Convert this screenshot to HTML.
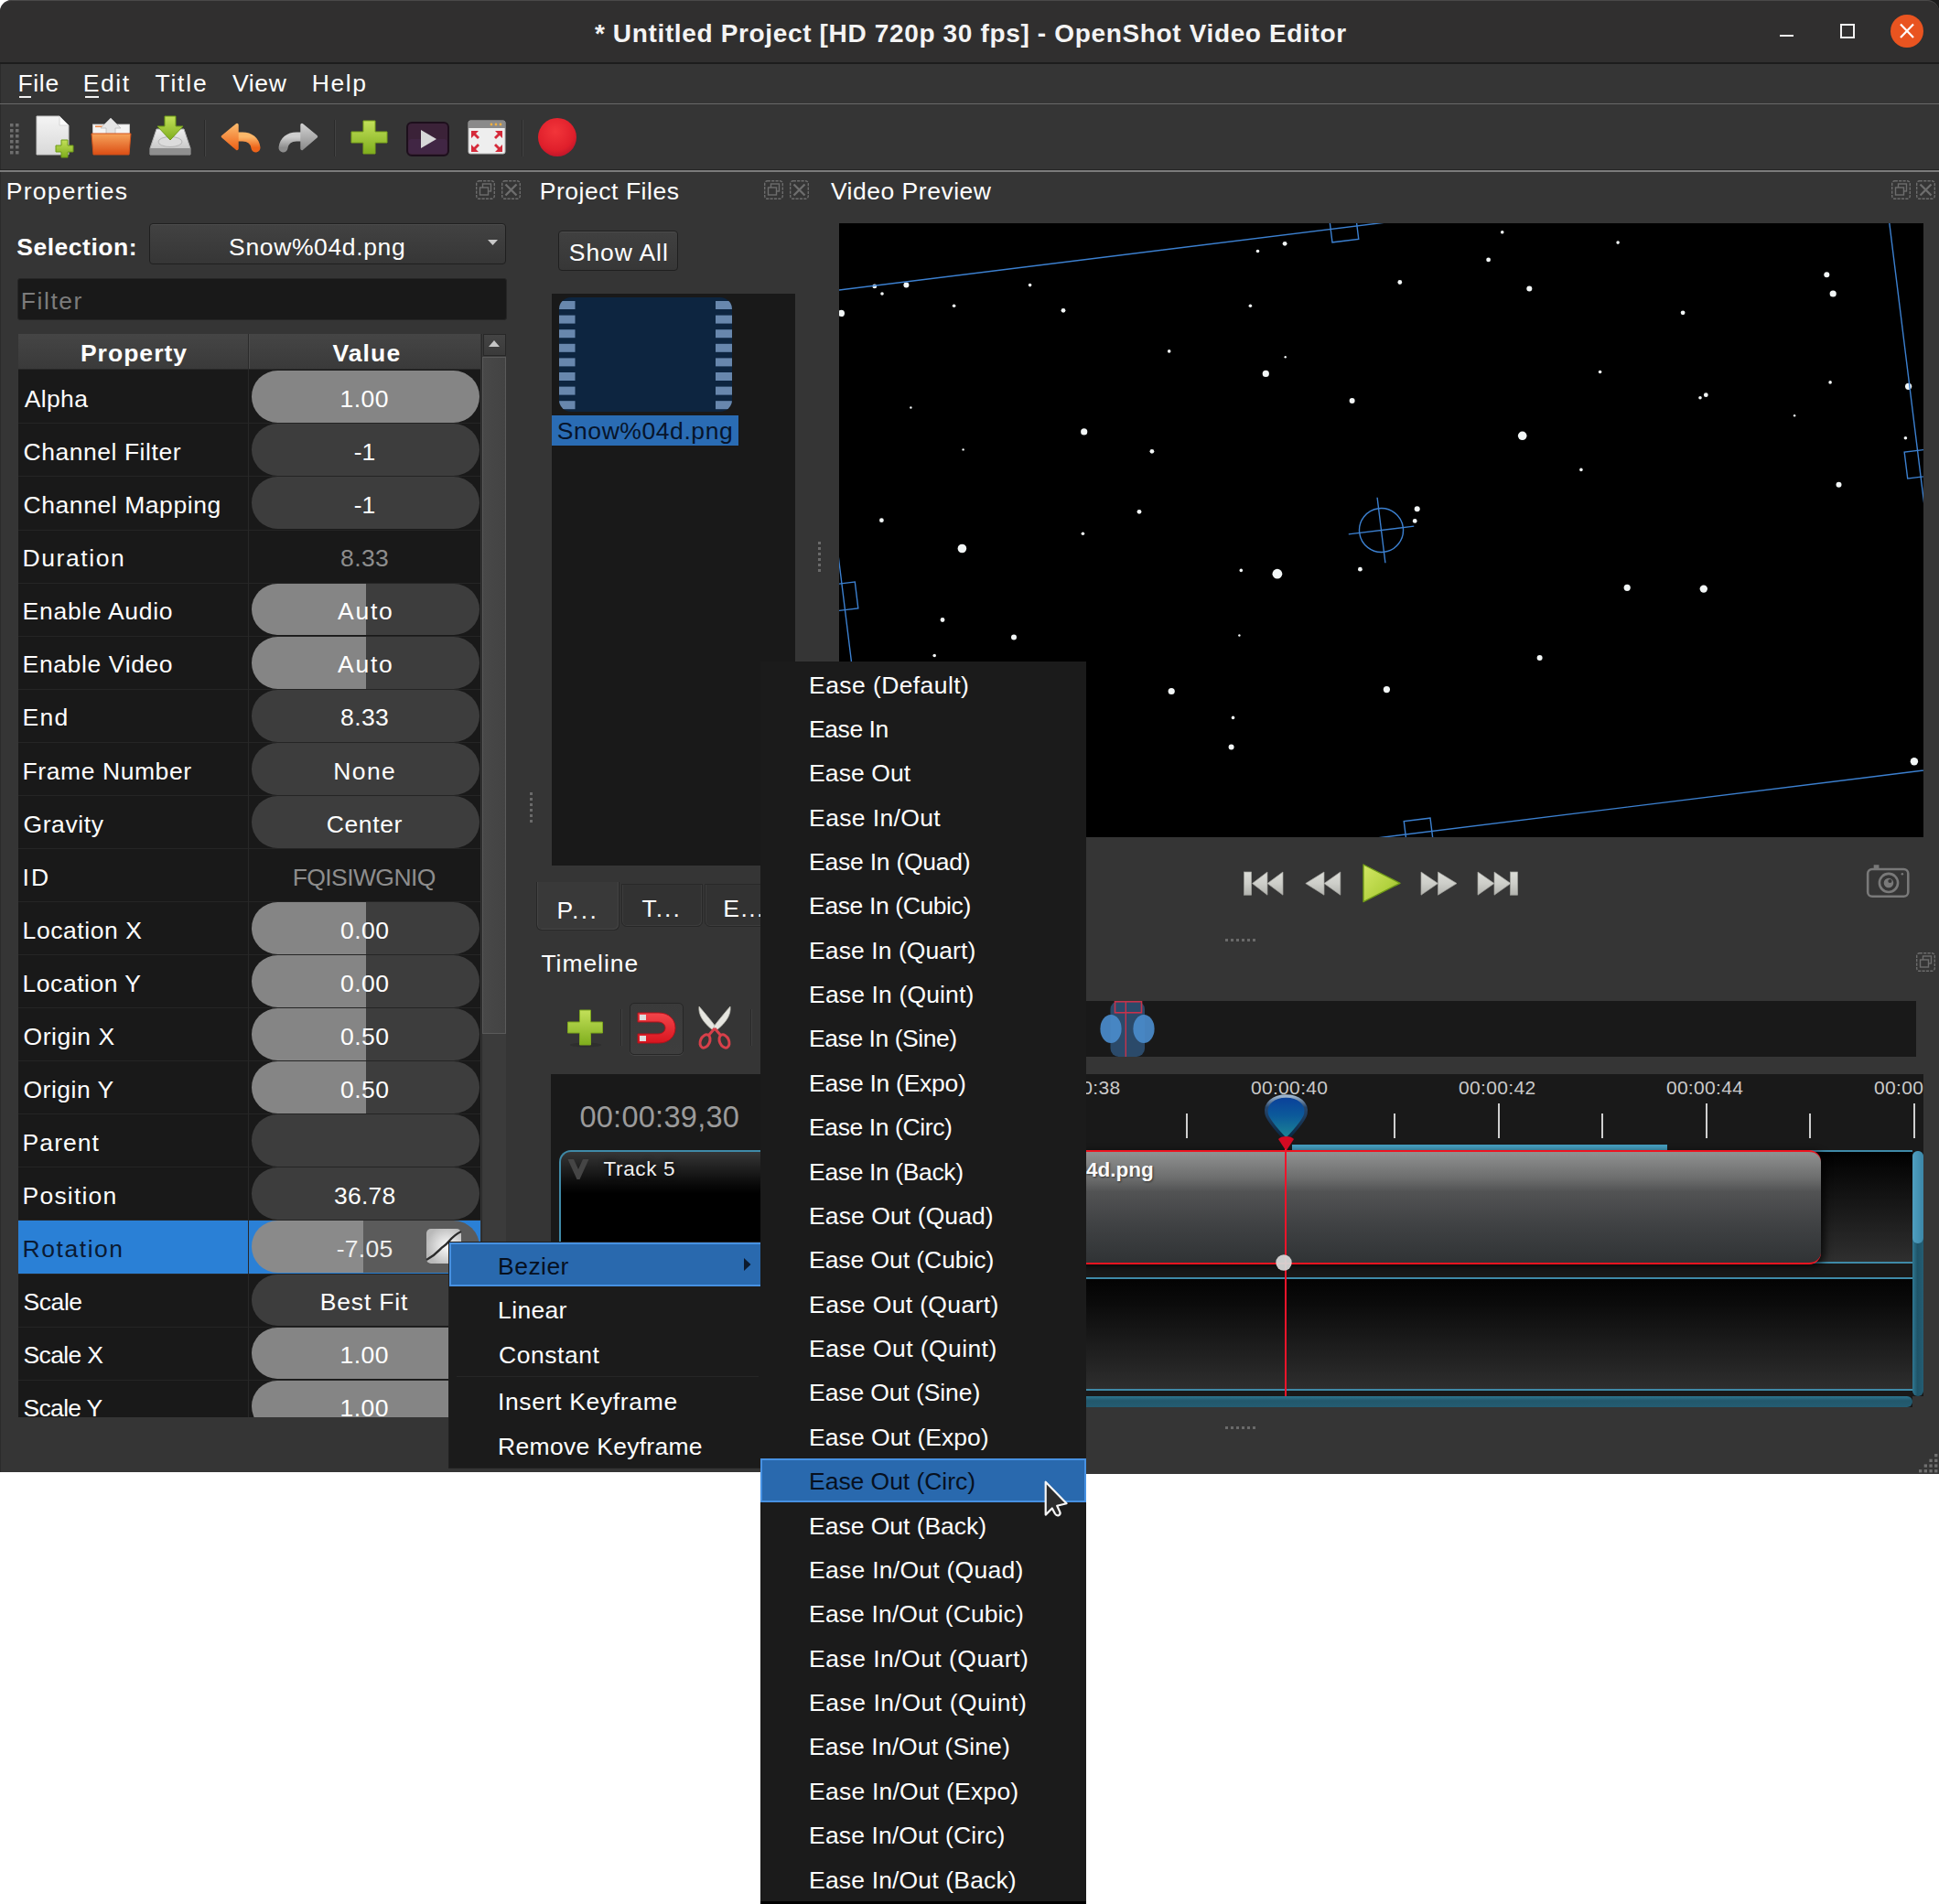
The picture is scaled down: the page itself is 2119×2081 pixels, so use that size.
<!DOCTYPE html>
<html><head><meta charset="utf-8"><title>OpenShot Video Editor</title>
<style>
html,body{margin:0;padding:0;}
body{width:2119px;height:2081px;background:#fff;position:relative;overflow:hidden;font-family:"Liberation Sans",sans-serif;}
.b{position:absolute;box-sizing:border-box;}
.t{position:absolute;white-space:pre;}
svg{position:absolute;overflow:visible;}
</style></head><body>
<div class="b" style="left:2095.0px;top:0.0px;width:24.0px;height:24.0px;background:#1c1c1c;"></div>
<div class="b" style="left:0.0px;top:0.0px;width:2119.0px;height:1609.3px;background:#353535;border-radius:13px 13px 0 0;border-left:1px solid #2b2b2b;"></div>
<div class="b" style="left:1000.0px;top:1600.0px;width:1119.0px;height:11.4px;background:#353535;"></div>
<div class="b" style="left:0.0px;top:0.0px;width:2119.0px;height:70.0px;background:#302f2f;border-radius:13px 13px 0 0;border-top:1px solid #4a4949;border-bottom:2px solid #1d1d1d;"></div>
<span class="t " style="left:649.9px;top:22.6px;font-size:28px;line-height:28px;color:#f4f4f4;letter-spacing:0.65px;font-weight:bold;">* Untitled Project [HD 720p 30 fps] - OpenShot Video Editor</span>
<div class="b" style="left:1944.5px;top:37.5px;width:15.5px;height:2.0px;background:#f2f2f2;"></div>
<div class="b" style="left:2010.5px;top:26.0px;width:16.0px;height:16.0px;border:2px solid #f2f2f2;"></div>
<div class="b" style="left:2066.0px;top:16.0px;width:36.0px;height:36.0px;background:#e95420;border-radius:50%;"></div>
<svg style="left:2066px;top:16px" width="36" height="36"><path d="M11 10.5 L25 25 M25 10.5 L11 25" stroke="#fff" stroke-width="2.2" fill="none"/></svg>
<span class="t " style="left:19.5px;top:78.1px;font-size:26.5px;line-height:26.5px;color:#fff;letter-spacing:0.65px;">File</span>
<span class="t " style="left:90.8px;top:78.1px;font-size:26.5px;line-height:26.5px;color:#fff;letter-spacing:1.57px;">Edit</span>
<span class="t " style="left:169.4px;top:78.1px;font-size:26.5px;line-height:26.5px;color:#fff;letter-spacing:1.80px;">Title</span>
<span class="t " style="left:253.9px;top:78.1px;font-size:26.5px;line-height:26.5px;color:#fff;letter-spacing:0.70px;">View</span>
<span class="t " style="left:340.8px;top:78.1px;font-size:26.5px;line-height:26.5px;color:#fff;letter-spacing:1.60px;">Help</span>
<div class="b" style="left:20.8px;top:104.5px;width:13.0px;height:2.0px;background:#f0f0f0;"></div>
<div class="b" style="left:92.5px;top:104.5px;width:15.5px;height:2.0px;background:#f0f0f0;"></div>
<div class="b" style="left:0.0px;top:113.0px;width:2119.0px;height:1.0px;background:#686868;"></div>
<div class="b" style="left:0.0px;top:184.5px;width:2119.0px;height:1.5px;background:#242424;"></div>
<div class="b" style="left:0.0px;top:186.0px;width:2119.0px;height:1.5px;background:#7b7b7b;"></div>
<svg style="left:11px;top:135px" width="12" height="36"><rect x="0" y="0" width="3.5" height="3.5" fill="#6e6e6e"/><rect x="6" y="0" width="3.5" height="3.5" fill="#6e6e6e"/><rect x="0" y="6" width="3.5" height="3.5" fill="#6e6e6e"/><rect x="6" y="6" width="3.5" height="3.5" fill="#6e6e6e"/><rect x="0" y="12" width="3.5" height="3.5" fill="#6e6e6e"/><rect x="6" y="12" width="3.5" height="3.5" fill="#6e6e6e"/><rect x="0" y="18" width="3.5" height="3.5" fill="#6e6e6e"/><rect x="6" y="18" width="3.5" height="3.5" fill="#6e6e6e"/><rect x="0" y="24" width="3.5" height="3.5" fill="#6e6e6e"/><rect x="6" y="24" width="3.5" height="3.5" fill="#6e6e6e"/><rect x="0" y="30" width="3.5" height="3.5" fill="#6e6e6e"/><rect x="6" y="30" width="3.5" height="3.5" fill="#6e6e6e"/></svg>
<svg style="left:39px;top:126px" width="42" height="47" viewBox="0 0 42 47">
<defs><linearGradient id="gdoc" x1="0" y1="0" x2="0" y2="1"><stop offset="0" stop-color="#f4f4f4"/><stop offset="1" stop-color="#d9d9d9"/></linearGradient>
<linearGradient id="ggreen" x1="0" y1="0" x2="0" y2="1"><stop offset="0" stop-color="#c3e05a"/><stop offset="1" stop-color="#7fae1d"/></linearGradient></defs>
<path d="M1 1 H26 L36 11 V43 H1 Z" fill="url(#gdoc)" stroke="#c9c9c9" stroke-width="1"/>
<path d="M26 1 V11 H36 Z" fill="#fafafa" stroke="#cfcfcf" stroke-width="0.8"/>
<path d="M28 27 h7 v6 h6 v7 h-6 v6 h-7 v-6 h-6 v-7 h6 z" fill="url(#ggreen)" stroke="#6f9c16" stroke-width="1"/>
</svg>
<svg style="left:98px;top:127px" width="47" height="44" viewBox="0 0 47 44">
<defs><linearGradient id="gfold" x1="0" y1="0" x2="0" y2="1"><stop offset="0" stop-color="#f6a45c"/><stop offset="1" stop-color="#dc4e14"/></linearGradient></defs>
<rect x="3.5" y="9" width="40" height="13" fill="#f4f4f4" stroke="#d0d0d0" stroke-width="0.8"/>
<rect x="6" y="10.5" width="10" height="1.6" fill="#ef8a4a"/>
<path d="M23 2 L34 13 H28 V21 H18 V13 H12 Z" fill="#e4e4e4" stroke="#bdbdbd" stroke-width="0.8"/>
<path d="M2 19 H45 L43 42 H4 Z" fill="url(#gfold)" stroke="#d2501a" stroke-width="1"/>
</svg>
<svg style="left:162px;top:126px" width="48" height="46" viewBox="0 0 48 46">
<defs><linearGradient id="gdrv" x1="0" y1="0" x2="0" y2="1"><stop offset="0" stop-color="#f0f0f0"/><stop offset="1" stop-color="#bdbdbd"/></linearGradient></defs>
<path d="M9 15 H39 L46 36 V43 H2 V36 Z" fill="url(#gdrv)" stroke="#a9a9a9" stroke-width="1"/>
<path d="M2 36 H46 V43 H2 Z" fill="#8f8f8f"/>
<ellipse cx="24" cy="29" rx="13" ry="5.5" fill="#dcdcdc" stroke="#b5b5b5" stroke-width="1"/>
<path d="M18 1 H30 V12 H38 L24 27 L10 12 H18 Z" fill="url(#ggreen)" stroke="#6f9c16" stroke-width="1"/>
</svg>
<div class="b" style="left:222.5px;top:131.0px;width:1.0px;height:40.0px;background:#2a2a2a;"></div>
<div class="b" style="left:223.5px;top:131.0px;width:1.0px;height:40.0px;background:#424242;"></div>
<svg style="left:240px;top:133px" width="46" height="36" viewBox="0 0 46 36">
<defs><linearGradient id="gund" x1="0" y1="0" x2="0" y2="1"><stop offset="0" stop-color="#fcb86a"/><stop offset="1" stop-color="#ee641a"/></linearGradient>
<linearGradient id="gred" x1="0" y1="0" x2="0" y2="1"><stop offset="0" stop-color="#cfcfcf"/><stop offset="1" stop-color="#8d8d8d"/></linearGradient></defs>
<path d="M18 16.5 H25 C33 16.5 38.5 21 39.5 28.5" fill="none" stroke="url(#gund)" stroke-width="10" stroke-linecap="round"/>
<path d="M19 3.5 L3.5 16.2 L19 29.5 Z" fill="url(#gund)" stroke="url(#gund)" stroke-width="3.4" stroke-linejoin="round"/>
</svg>
<svg style="left:303px;top:133px" width="46" height="36" viewBox="0 0 46 36">
<path d="M28 16.5 H21 C13 16.5 7.5 21 6.5 28.5" fill="none" stroke="url(#gred)" stroke-width="10" stroke-linecap="round"/>
<path d="M27 3.5 L42.5 16.2 L27 29.5 Z" fill="url(#gred)" stroke="url(#gred)" stroke-width="3.4" stroke-linejoin="round"/>
</svg>
<div class="b" style="left:364.5px;top:131.0px;width:1.0px;height:40.0px;background:#2a2a2a;"></div>
<div class="b" style="left:365.5px;top:131.0px;width:1.0px;height:40.0px;background:#424242;"></div>
<svg style="left:383px;top:131px" width="41" height="38" viewBox="0 0 41 38">
<path d="M14 1 h13 v12 h13 v12 h-13 v12 h-13 v-12 h-13 v-12 h13 z" fill="url(#ggreen)" stroke="#7da61d" stroke-width="1" stroke-linejoin="round"/>
</svg>
<svg style="left:444px;top:133px" width="47" height="38" viewBox="0 0 47 38">
<rect x="1" y="1" width="45" height="36" rx="5" fill="#3b2238" stroke="#1d0f1c" stroke-width="2"/>
<rect x="2.5" y="19" width="42" height="16" rx="3" fill="#45284a" opacity="0.7"/>
<path d="M16 9 L33 19 L16 29 Z" fill="#d8d8d8"/>
</svg>
<svg style="left:511px;top:131px" width="42" height="38" viewBox="0 0 42 38">
<rect x="1" y="1" width="40" height="36" rx="2" fill="#eeeeee" stroke="#bbb" stroke-width="1"/>
<rect x="1" y="1" width="40" height="8" fill="#8a8a8a"/>
<circle cx="26" cy="5" r="1.4" fill="#f0b040"/><circle cx="31" cy="5" r="1.4" fill="#f0b040"/><circle cx="36" cy="5" r="1.4" fill="#f0b040"/>
<g fill="#d52a3a"><path d="M4 12 h8 l-3 3 4 4 -2 2 -4 -4 -3 3z"/><path d="M38 12 h-8 l3 3 -4 4 2 2 4 -4 3 3z"/><path d="M4 35 h8 l-3 -3 4 -4 -2 -2 -4 4 -3 -3z"/><path d="M38 35 h-8 l3 -3 -4 -4 2 -2 4 4 3 -3z"/></g>
</svg>
<div class="b" style="left:569.5px;top:131.0px;width:1.0px;height:40.0px;background:#2a2a2a;"></div>
<div class="b" style="left:570.5px;top:131.0px;width:1.0px;height:40.0px;background:#424242;"></div>
<svg style="left:587px;top:128px" width="44" height="44" viewBox="0 0 44 44">
<defs><radialGradient id="grec" cx="0.45" cy="0.35" r="0.7"><stop offset="0" stop-color="#f2353a"/><stop offset="0.7" stop-color="#e01f2b"/><stop offset="1" stop-color="#b8142a"/></radialGradient></defs>
<circle cx="22" cy="22" r="21" fill="url(#grec)"/></svg>
<span class="t " style="left:6.8px;top:195.9px;font-size:26.5px;line-height:26.5px;color:#fff;letter-spacing:1.26px;">Properties</span>
<svg style="left:520px;top:197px" width="21" height="21" viewBox="0 0 21 21">
<rect x="0.7" y="0.7" width="19.6" height="19.6" rx="3" fill="none" stroke="#6d6d6d" stroke-width="1.4" stroke-dasharray="3.2 1.2"/>
<rect x="7.5" y="4" width="9" height="8" fill="none" stroke="#6d6d6d" stroke-width="1.4"/>
<rect x="4.5" y="8" width="9" height="8" fill="#353535" stroke="#6d6d6d" stroke-width="1.4"/></svg>
<svg style="left:547.5px;top:197px" width="21" height="21" viewBox="0 0 21 21">
<rect x="0.7" y="0.7" width="19.6" height="19.6" rx="3" fill="none" stroke="#6d6d6d" stroke-width="1.4" stroke-dasharray="3.2 1.2"/>
<path d="M4.5 4.5 L16.5 16.5 M16.5 4.5 L4.5 16.5" stroke="#6d6d6d" stroke-width="2.4"/></svg>
<span class="t " style="left:18.2px;top:256.8px;font-size:26.5px;line-height:26.5px;color:#fff;letter-spacing:0.52px;font-weight:bold;">Selection:</span>
<div class="b" style="left:163.0px;top:244.0px;width:390.0px;height:45.0px;border:1px solid #1f1f1f;border-radius:4px;background:linear-gradient(#424242,#363636);box-shadow:inset 0 1px 0 #4d4d4d;"></div>
<span class="t " style="left:250.1px;top:256.8px;font-size:26.5px;line-height:26.5px;color:#fff;letter-spacing:0.63px;">Snow%04d.png</span>
<svg style="left:533px;top:262px" width="12" height="7"><path d="M0 0 H11 L5.5 6 Z" fill="#c8c8c8"/></svg>
<div class="b" style="left:19.0px;top:304.0px;width:535.0px;height:46.0px;background:#191919;border:1px solid #262626;border-radius:3px;"></div>
<span class="t " style="left:22.8px;top:316.4px;font-size:26.5px;line-height:26.5px;color:#7c7c7c;letter-spacing:1.55px;">Filter</span>
<div class="b" style="left:20.0px;top:365.0px;width:505.0px;height:1184.0px;background:#191919;"></div>
<div class="b" style="left:20.0px;top:365.0px;width:505.0px;height:38.5px;background:linear-gradient(#454545,#3a3a3a);border-bottom:1px solid #2a2a2a;"></div>
<div class="b" style="left:270.5px;top:365.0px;width:1.5px;height:38.0px;background:#2b2b2b;"></div>
<div class="b" style="left:272.0px;top:365.0px;width:1.0px;height:38.0px;background:#4b4b4b;"></div>
<span class="t " style="left:87.9px;top:373.4px;font-size:26.5px;line-height:26.5px;color:#fff;letter-spacing:1.03px;font-weight:bold;">Property</span>
<span class="t " style="left:363.4px;top:373.4px;font-size:26.5px;line-height:26.5px;color:#fff;letter-spacing:1.14px;font-weight:bold;">Value</span>
<div class="b" style="left:20px;top:365px;width:505px;height:1184px;overflow:hidden;">
<div class="b" style="left:0;top:97.4px;width:505px;height:1px;background:#252525;"></div>
<div class="b" style="left:254.5px;top:40.3px;width:249.5px;height:56.9px;border-radius:29px;background:linear-gradient(90deg,#858585 100.0%,#3d3d3d 100.0%);"></div>
<span class="t " style="left:6.7px;top:58.0px;font-size:26.5px;line-height:26.5px;color:#fff;letter-spacing:0.37px;">Alpha</span>
<span class="t " style="left:351.5px;top:58.0px;font-size:26.5px;line-height:26.5px;color:#fff;letter-spacing:0.49px;">1.00</span>
<div class="b" style="left:0;top:155.4px;width:505px;height:1px;background:#252525;"></div>
<div class="b" style="left:254.5px;top:98.4px;width:249.5px;height:56.9px;border-radius:29px;background:linear-gradient(90deg,#858585 0%,#3d3d3d 0%);"></div>
<span class="t " style="left:5.5px;top:116.0px;font-size:26.5px;line-height:26.5px;color:#fff;letter-spacing:0.54px;">Channel Filter</span>
<span class="t " style="left:366.8px;top:116.0px;font-size:26.5px;line-height:26.5px;color:#fff;letter-spacing:-0.09px;">-1</span>
<div class="b" style="left:0;top:213.5px;width:505px;height:1px;background:#252525;"></div>
<div class="b" style="left:254.5px;top:156.4px;width:249.5px;height:56.9px;border-radius:29px;background:linear-gradient(90deg,#858585 0%,#3d3d3d 0%);"></div>
<span class="t " style="left:5.5px;top:174.1px;font-size:26.5px;line-height:26.5px;color:#fff;letter-spacing:0.57px;">Channel Mapping</span>
<span class="t " style="left:366.8px;top:174.1px;font-size:26.5px;line-height:26.5px;color:#fff;letter-spacing:-0.09px;">-1</span>
<div class="b" style="left:0;top:271.6px;width:505px;height:1px;background:#252525;"></div>
<span class="t " style="left:4.6px;top:232.2px;font-size:26.5px;line-height:26.5px;color:#fff;letter-spacing:1.56px;">Duration</span>
<span class="t " style="left:352.1px;top:232.2px;font-size:26.5px;line-height:26.5px;color:#8d8d8d;letter-spacing:0.38px;">8.33</span>
<div class="b" style="left:0;top:329.7px;width:505px;height:1px;background:#252525;"></div>
<div class="b" style="left:254.5px;top:272.6px;width:249.5px;height:56.9px;border-radius:29px;background:linear-gradient(90deg,#858585 50.0%,#3d3d3d 50.0%);"></div>
<span class="t " style="left:4.6px;top:290.2px;font-size:26.5px;line-height:26.5px;color:#fff;letter-spacing:0.71px;">Enable Audio</span>
<span class="t " style="left:349.1px;top:290.2px;font-size:26.5px;line-height:26.5px;color:#fff;letter-spacing:1.75px;">Auto</span>
<div class="b" style="left:0;top:387.7px;width:505px;height:1px;background:#252525;"></div>
<div class="b" style="left:254.5px;top:330.7px;width:249.5px;height:56.9px;border-radius:29px;background:linear-gradient(90deg,#858585 50.0%,#3d3d3d 50.0%);"></div>
<span class="t " style="left:4.6px;top:348.3px;font-size:26.5px;line-height:26.5px;color:#fff;letter-spacing:0.62px;">Enable Video</span>
<span class="t " style="left:349.1px;top:348.3px;font-size:26.5px;line-height:26.5px;color:#fff;letter-spacing:1.75px;">Auto</span>
<div class="b" style="left:0;top:445.8px;width:505px;height:1px;background:#252525;"></div>
<div class="b" style="left:254.5px;top:388.7px;width:249.5px;height:56.9px;border-radius:29px;background:linear-gradient(90deg,#858585 0%,#3d3d3d 0%);"></div>
<span class="t " style="left:4.6px;top:406.4px;font-size:26.5px;line-height:26.5px;color:#fff;letter-spacing:1.22px;">End</span>
<span class="t " style="left:352.1px;top:406.4px;font-size:26.5px;line-height:26.5px;color:#fff;letter-spacing:0.38px;">8.33</span>
<div class="b" style="left:0;top:503.9px;width:505px;height:1px;background:#252525;"></div>
<div class="b" style="left:254.5px;top:446.8px;width:249.5px;height:56.9px;border-radius:29px;background:linear-gradient(90deg,#858585 0%,#3d3d3d 0%);"></div>
<span class="t " style="left:4.6px;top:464.5px;font-size:26.5px;line-height:26.5px;color:#fff;letter-spacing:0.57px;">Frame Number</span>
<span class="t " style="left:344.2px;top:464.5px;font-size:26.5px;line-height:26.5px;color:#fff;letter-spacing:1.43px;">None</span>
<div class="b" style="left:0;top:561.9px;width:505px;height:1px;background:#252525;"></div>
<div class="b" style="left:254.5px;top:504.9px;width:249.5px;height:56.9px;border-radius:29px;background:linear-gradient(90deg,#858585 0%,#3d3d3d 0%);"></div>
<span class="t " style="left:5.5px;top:522.5px;font-size:26.5px;line-height:26.5px;color:#fff;letter-spacing:0.58px;">Gravity</span>
<span class="t " style="left:336.8px;top:522.5px;font-size:26.5px;line-height:26.5px;color:#fff;letter-spacing:0.59px;">Center</span>
<div class="b" style="left:0;top:620.0px;width:505px;height:1px;background:#252525;"></div>
<span class="t " style="left:4.4px;top:580.6px;font-size:26.5px;line-height:26.5px;color:#fff;letter-spacing:2.21px;">ID</span>
<span class="t " style="left:299.7px;top:580.6px;font-size:26.5px;line-height:26.5px;color:#8d8d8d;letter-spacing:-0.59px;">FQISIWGNIQ</span>
<div class="b" style="left:0;top:678.1px;width:505px;height:1px;background:#252525;"></div>
<div class="b" style="left:254.5px;top:621.0px;width:249.5px;height:56.9px;border-radius:29px;background:linear-gradient(90deg,#858585 50.0%,#3d3d3d 50.0%);"></div>
<span class="t " style="left:4.6px;top:638.7px;font-size:26.5px;line-height:26.5px;color:#fff;letter-spacing:0.56px;">Location X</span>
<span class="t " style="left:352.0px;top:638.7px;font-size:26.5px;line-height:26.5px;color:#fff;letter-spacing:0.50px;">0.00</span>
<div class="b" style="left:0;top:736.1px;width:505px;height:1px;background:#252525;"></div>
<div class="b" style="left:254.5px;top:679.1px;width:249.5px;height:56.9px;border-radius:29px;background:linear-gradient(90deg,#858585 50.0%,#3d3d3d 50.0%);"></div>
<span class="t " style="left:4.6px;top:696.7px;font-size:26.5px;line-height:26.5px;color:#fff;letter-spacing:0.52px;">Location Y</span>
<span class="t " style="left:352.0px;top:696.7px;font-size:26.5px;line-height:26.5px;color:#fff;letter-spacing:0.50px;">0.00</span>
<div class="b" style="left:0;top:794.2px;width:505px;height:1px;background:#252525;"></div>
<div class="b" style="left:254.5px;top:737.1px;width:249.5px;height:56.9px;border-radius:29px;background:linear-gradient(90deg,#858585 50.0%,#3d3d3d 50.0%);"></div>
<span class="t " style="left:5.5px;top:754.8px;font-size:26.5px;line-height:26.5px;color:#fff;letter-spacing:0.58px;">Origin X</span>
<span class="t " style="left:352.0px;top:754.8px;font-size:26.5px;line-height:26.5px;color:#fff;letter-spacing:0.50px;">0.50</span>
<div class="b" style="left:0;top:852.3px;width:505px;height:1px;background:#252525;"></div>
<div class="b" style="left:254.5px;top:795.2px;width:249.5px;height:56.9px;border-radius:29px;background:linear-gradient(90deg,#858585 50.0%,#3d3d3d 50.0%);"></div>
<span class="t " style="left:5.5px;top:812.9px;font-size:26.5px;line-height:26.5px;color:#fff;letter-spacing:0.50px;">Origin Y</span>
<span class="t " style="left:352.0px;top:812.9px;font-size:26.5px;line-height:26.5px;color:#fff;letter-spacing:0.50px;">0.50</span>
<div class="b" style="left:0;top:910.4px;width:505px;height:1px;background:#252525;"></div>
<div class="b" style="left:254.5px;top:853.3px;width:249.5px;height:56.9px;border-radius:29px;background:linear-gradient(90deg,#858585 0%,#3d3d3d 0%);"></div>
<span class="t " style="left:4.6px;top:870.9px;font-size:26.5px;line-height:26.5px;color:#fff;letter-spacing:1.06px;">Parent</span>
<div class="b" style="left:0;top:968.4px;width:505px;height:1px;background:#252525;"></div>
<div class="b" style="left:254.5px;top:911.3px;width:249.5px;height:56.9px;border-radius:29px;background:linear-gradient(90deg,#858585 0%,#3d3d3d 0%);"></div>
<span class="t " style="left:4.6px;top:929.0px;font-size:26.5px;line-height:26.5px;color:#fff;letter-spacing:1.20px;">Position</span>
<span class="t " style="left:345.0px;top:929.0px;font-size:26.5px;line-height:26.5px;color:#fff;letter-spacing:0.21px;">36.78</span>
<div class="b" style="left:0;top:969.4px;width:505px;height:58.1px;background:#2a80d6;"></div>
<div class="b" style="left:0;top:1026.5px;width:505px;height:1px;background:#252525;"></div>
<div class="b" style="left:254.5px;top:969.4px;width:249.5px;height:56.9px;border-radius:29px;background:linear-gradient(90deg,#8a8a8a 49.0%,#5b5b5b 49.0%);"></div>
<span class="t " style="left:4.6px;top:987.1px;font-size:26.5px;line-height:26.5px;color:#0a1a33;letter-spacing:1.54px;">Rotation</span>
<span class="t " style="left:347.7px;top:987.1px;font-size:26.5px;line-height:26.5px;color:#efefef;letter-spacing:0.30px;">-7.05</span>
<div class="b" style="left:0;top:1084.6px;width:505px;height:1px;background:#252525;"></div>
<div class="b" style="left:254.5px;top:1027.5px;width:249.5px;height:56.9px;border-radius:29px;background:linear-gradient(90deg,#858585 0%,#3d3d3d 0%);"></div>
<span class="t " style="left:5.6px;top:1045.2px;font-size:26.5px;line-height:26.5px;color:#fff;letter-spacing:-0.45px;">Scale</span>
<span class="t " style="left:329.8px;top:1045.2px;font-size:26.5px;line-height:26.5px;color:#fff;letter-spacing:0.81px;">Best Fit</span>
<div class="b" style="left:0;top:1142.6px;width:505px;height:1px;background:#252525;"></div>
<div class="b" style="left:254.5px;top:1085.6px;width:249.5px;height:56.9px;border-radius:29px;background:linear-gradient(90deg,#858585 100.0%,#3d3d3d 100.0%);"></div>
<span class="t " style="left:5.6px;top:1103.2px;font-size:26.5px;line-height:26.5px;color:#fff;letter-spacing:-0.68px;">Scale X</span>
<span class="t " style="left:351.5px;top:1103.2px;font-size:26.5px;line-height:26.5px;color:#fff;letter-spacing:0.49px;">1.00</span>
<div class="b" style="left:0;top:1200.7px;width:505px;height:1px;background:#252525;"></div>
<div class="b" style="left:254.5px;top:1143.6px;width:249.5px;height:56.9px;border-radius:29px;background:linear-gradient(90deg,#858585 100.0%,#3d3d3d 100.0%);"></div>
<span class="t " style="left:5.6px;top:1161.3px;font-size:26.5px;line-height:26.5px;color:#fff;letter-spacing:-0.71px;">Scale Y</span>
<span class="t " style="left:351.5px;top:1161.3px;font-size:26.5px;line-height:26.5px;color:#fff;letter-spacing:0.49px;">1.00</span>
<div class="b" style="left:250.5px;top:38.5px;width:1px;height:1184px;background:#272727;"></div>
<svg style="left:445px;top:976.9px" width="40" height="40" viewBox="0 0 40 40">
<defs><radialGradient id="gkf" cx="0.6" cy="0.5" r="0.6"><stop offset="0" stop-color="#fdfdfd"/><stop offset="1" stop-color="#b9b9b9"/></radialGradient></defs>
<rect x="1" y="1" width="38" height="38" rx="5" fill="url(#gkf)"/>
<path d="M1 35 C13 29 15 23 20 20 C25 17 28 9 39 4" fill="none" stroke="#2b2b2b" stroke-width="2.4"/></svg>
</div>
<div class="b" style="left:526.0px;top:365.0px;width:27.0px;height:1184.0px;background:#3b3b3b;border-left:1px solid #2a2a2a;"></div>
<div class="b" style="left:527.5px;top:365.0px;width:25.0px;height:24.0px;background:linear-gradient(#444,#3a3a3a);border:1px solid #272727;"></div>
<svg style="left:534px;top:372px" width="12" height="8"><path d="M0 7 L6 0 L12 7 Z" fill="#c6c6c6"/></svg>
<div class="b" style="left:527.0px;top:390.0px;width:25.5px;height:740.0px;background:linear-gradient(90deg,#484848,#434343);border:1px solid #5a5a5a;"></div>
<div class="b" style="left:578.5px;top:866.0px;width:3.0px;height:3.0px;background:#6a6a6a;"></div>
<div class="b" style="left:578.5px;top:872.0px;width:3.0px;height:3.0px;background:#6a6a6a;"></div>
<div class="b" style="left:578.5px;top:878.0px;width:3.0px;height:3.0px;background:#6a6a6a;"></div>
<div class="b" style="left:578.5px;top:884.0px;width:3.0px;height:3.0px;background:#6a6a6a;"></div>
<div class="b" style="left:578.5px;top:890.0px;width:3.0px;height:3.0px;background:#6a6a6a;"></div>
<div class="b" style="left:578.5px;top:896.0px;width:3.0px;height:3.0px;background:#6a6a6a;"></div>
<span class="t " style="left:589.8px;top:195.9px;font-size:26.5px;line-height:26.5px;color:#fff;letter-spacing:0.53px;">Project Files</span>
<svg style="left:835px;top:197px" width="21" height="21" viewBox="0 0 21 21">
<rect x="0.7" y="0.7" width="19.6" height="19.6" rx="3" fill="none" stroke="#6d6d6d" stroke-width="1.4" stroke-dasharray="3.2 1.2"/>
<rect x="7.5" y="4" width="9" height="8" fill="none" stroke="#6d6d6d" stroke-width="1.4"/>
<rect x="4.5" y="8" width="9" height="8" fill="#353535" stroke="#6d6d6d" stroke-width="1.4"/></svg>
<svg style="left:862.5px;top:197px" width="21" height="21" viewBox="0 0 21 21">
<rect x="0.7" y="0.7" width="19.6" height="19.6" rx="3" fill="none" stroke="#6d6d6d" stroke-width="1.4" stroke-dasharray="3.2 1.2"/>
<path d="M4.5 4.5 L16.5 16.5 M16.5 4.5 L4.5 16.5" stroke="#6d6d6d" stroke-width="2.4"/></svg>
<div class="b" style="left:610.0px;top:252.0px;width:131.0px;height:44.0px;border:1px solid #1f1f1f;border-radius:4px;background:linear-gradient(#404040,#373737);box-shadow:inset 0 1px 0 #4c4c4c;"></div>
<span class="t " style="left:621.8px;top:263.1px;font-size:26.5px;line-height:26.5px;color:#fff;letter-spacing:0.91px;">Show All</span>
<div class="b" style="left:603.0px;top:320.5px;width:266.0px;height:625.5px;background:#191919;"></div>
<svg style="left:610.5px;top:325px" width="189" height="125" viewBox="0 0 189 125">
<defs><clipPath id="cth"><rect x="0" y="0" width="189" height="125" rx="13"/></clipPath></defs>
<g clip-path="url(#cth)"><rect x="0" y="0" width="189" height="125" fill="#0d2540"/><rect x="0" y="4.0" width="17.5" height="9" fill="#6887ad"/><rect x="171" y="4.0" width="18" height="9" fill="#6887ad"/><rect x="0" y="19.6" width="17.5" height="9" fill="#6887ad"/><rect x="171" y="19.6" width="18" height="9" fill="#6887ad"/><rect x="0" y="35.2" width="17.5" height="9" fill="#6887ad"/><rect x="171" y="35.2" width="18" height="9" fill="#6887ad"/><rect x="0" y="50.8" width="17.5" height="9" fill="#6887ad"/><rect x="171" y="50.8" width="18" height="9" fill="#6887ad"/><rect x="0" y="66.4" width="17.5" height="9" fill="#6887ad"/><rect x="171" y="66.4" width="18" height="9" fill="#6887ad"/><rect x="0" y="82.0" width="17.5" height="9" fill="#6887ad"/><rect x="171" y="82.0" width="18" height="9" fill="#6887ad"/><rect x="0" y="97.6" width="17.5" height="9" fill="#6887ad"/><rect x="171" y="97.6" width="18" height="9" fill="#6887ad"/><rect x="0" y="113.2" width="17.5" height="9" fill="#6887ad"/><rect x="171" y="113.2" width="18" height="9" fill="#6887ad"/></g></svg>
<div class="b" style="left:603.0px;top:454.0px;width:203.5px;height:32.5px;background:#2a6cb4;"></div>
<span class="t " style="left:608.8px;top:457.9px;font-size:26.5px;line-height:26.5px;color:#07142a;letter-spacing:0.57px;">Snow%04d.png</span>
<div class="b" style="left:585.5px;top:964.0px;width:91.5px;height:53.0px;background:#393939;border:1px solid #282828;border-top:none;border-radius:0 0 6px 6px;box-shadow:inset -1px -1px 0 #444,inset 1px 0 0 #444;"></div>
<div class="b" style="left:679.0px;top:966.0px;width:88.5px;height:47.0px;background:#323232;border:1px solid #282828;border-radius:0 0 6px 6px;box-shadow:inset -1px -1px 0 #3d3d3d,inset 1px 0 0 #3d3d3d;"></div>
<div class="b" style="left:769.5px;top:966.0px;width:88.5px;height:47.0px;background:#323232;border:1px solid #282828;border-radius:0 0 6px 6px;box-shadow:inset -1px -1px 0 #3d3d3d,inset 1px 0 0 #3d3d3d;"></div>
<span class="t " style="left:608.5px;top:981.9px;font-size:26.5px;line-height:26.5px;color:#fff;letter-spacing:2.35px;">P...</span>
<span class="t " style="left:701.4px;top:979.9px;font-size:26.5px;line-height:26.5px;color:#fff;letter-spacing:2.06px;">T...</span>
<span class="t " style="left:790.3px;top:979.9px;font-size:26.5px;line-height:26.5px;color:#fff;letter-spacing:1.44px;">E...</span>
<div class="b" style="left:894.0px;top:592.0px;width:3.0px;height:3.0px;background:#6a6a6a;"></div>
<div class="b" style="left:894.0px;top:598.0px;width:3.0px;height:3.0px;background:#6a6a6a;"></div>
<div class="b" style="left:894.0px;top:604.0px;width:3.0px;height:3.0px;background:#6a6a6a;"></div>
<div class="b" style="left:894.0px;top:610.0px;width:3.0px;height:3.0px;background:#6a6a6a;"></div>
<div class="b" style="left:894.0px;top:616.0px;width:3.0px;height:3.0px;background:#6a6a6a;"></div>
<div class="b" style="left:894.0px;top:622.0px;width:3.0px;height:3.0px;background:#6a6a6a;"></div>
<span class="t " style="left:907.9px;top:195.9px;font-size:26.5px;line-height:26.5px;color:#fff;letter-spacing:0.51px;">Video Preview</span>
<svg style="left:2066.5px;top:196.5px" width="21" height="21" viewBox="0 0 21 21">
<rect x="0.7" y="0.7" width="19.6" height="19.6" rx="3" fill="none" stroke="#6d6d6d" stroke-width="1.4" stroke-dasharray="3.2 1.2"/>
<rect x="7.5" y="4" width="9" height="8" fill="none" stroke="#6d6d6d" stroke-width="1.4"/>
<rect x="4.5" y="8" width="9" height="8" fill="#353535" stroke="#6d6d6d" stroke-width="1.4"/></svg>
<svg style="left:2094px;top:196.5px" width="21" height="21" viewBox="0 0 21 21">
<rect x="0.7" y="0.7" width="19.6" height="19.6" rx="3" fill="none" stroke="#6d6d6d" stroke-width="1.4" stroke-dasharray="3.2 1.2"/>
<path d="M4.5 4.5 L16.5 16.5 M16.5 4.5 L4.5 16.5" stroke="#6d6d6d" stroke-width="2.4"/></svg>
<div class="b" style="left:916.5px;top:243.5px;width:1185.5px;height:671px;background:#000;overflow:hidden;"><svg style="left:0;top:0" width="1185.5" height="671" viewBox="0 0 1185.5 671"><circle cx="2.4" cy="98.4" r="3.6" fill="#f2f6f6"/><circle cx="38.8" cy="68.9" r="2.4" fill="#f2f6f6"/><circle cx="47.0" cy="77.0" r="1.8" fill="#f2f6f6"/><circle cx="73.4" cy="67.6" r="3.0" fill="#f2f6f6"/><circle cx="125.6" cy="90.2" r="1.8" fill="#f2f6f6"/><circle cx="208.6" cy="67.6" r="1.8" fill="#f2f6f6"/><circle cx="245.0" cy="95.3" r="2.4" fill="#f2f6f6"/><circle cx="360.7" cy="139.9" r="1.8" fill="#f2f6f6"/><circle cx="449.4" cy="90.2" r="1.8" fill="#f2f6f6"/><circle cx="457.5" cy="30.5" r="1.8" fill="#f2f6f6"/><circle cx="487.1" cy="22.3" r="2.4" fill="#f2f6f6"/><circle cx="487.7" cy="146.2" r="1.2" fill="#f2f6f6"/><circle cx="466.3" cy="164.4" r="3.6" fill="#f2f6f6"/><circle cx="560.6" cy="194.0" r="3.0" fill="#f2f6f6"/><circle cx="612.8" cy="64.5" r="2.4" fill="#f2f6f6"/><circle cx="709.6" cy="39.9" r="2.4" fill="#f2f6f6"/><circle cx="724.7" cy="9.8" r="1.8" fill="#f2f6f6"/><circle cx="754.3" cy="71.4" r="3.0" fill="#f2f6f6"/><circle cx="851.1" cy="21.1" r="1.8" fill="#f2f6f6"/><circle cx="922.1" cy="97.8" r="2.4" fill="#f2f6f6"/><circle cx="831.6" cy="162.5" r="1.8" fill="#f2f6f6"/><circle cx="941.0" cy="190.8" r="1.8" fill="#f2f6f6"/><circle cx="947.3" cy="187.7" r="2.4" fill="#f2f6f6"/><circle cx="1079.3" cy="56.3" r="3.0" fill="#f2f6f6"/><circle cx="1086.2" cy="77.0" r="3.6" fill="#f2f6f6"/><circle cx="1083.1" cy="173.9" r="1.8" fill="#f2f6f6"/><circle cx="1044.1" cy="210.3" r="1.2" fill="#f2f6f6"/><circle cx="1168.6" cy="178.3" r="3.6" fill="#f2f6f6"/><circle cx="1165.4" cy="234.8" r="1.8" fill="#f2f6f6"/><circle cx="1092.5" cy="285.8" r="3.0" fill="#f2f6f6"/><circle cx="746.7" cy="232.3" r="4.8" fill="#f2f6f6"/><circle cx="810.9" cy="269.4" r="1.8" fill="#f2f6f6"/><circle cx="78.4" cy="201.5" r="1.2" fill="#f2f6f6"/><circle cx="135.6" cy="247.4" r="1.2" fill="#f2f6f6"/><circle cx="267.7" cy="227.9" r="3.6" fill="#f2f6f6"/><circle cx="341.9" cy="249.3" r="2.4" fill="#f2f6f6"/><circle cx="328.0" cy="315.3" r="2.4" fill="#f2f6f6"/><circle cx="266.4" cy="339.2" r="1.8" fill="#f2f6f6"/><circle cx="46.4" cy="324.7" r="2.4" fill="#f2f6f6"/><circle cx="134.4" cy="355.5" r="4.8" fill="#f2f6f6"/><circle cx="113.0" cy="433.5" r="2.4" fill="#f2f6f6"/><circle cx="191.0" cy="452.4" r="3.0" fill="#f2f6f6"/><circle cx="104.2" cy="472.5" r="1.8" fill="#f2f6f6"/><circle cx="439.3" cy="379.4" r="1.8" fill="#f2f6f6"/><circle cx="478.9" cy="383.2" r="5.4" fill="#f2f6f6"/><circle cx="569.4" cy="378.2" r="2.4" fill="#f2f6f6"/><circle cx="631.7" cy="312.2" r="3.0" fill="#f2f6f6"/><circle cx="629.2" cy="325.4" r="2.4" fill="#f2f6f6"/><circle cx="437.4" cy="450.5" r="1.2" fill="#f2f6f6"/><circle cx="363.2" cy="511.5" r="3.6" fill="#f2f6f6"/><circle cx="430.5" cy="540.4" r="1.8" fill="#f2f6f6"/><circle cx="428.6" cy="572.4" r="3.0" fill="#f2f6f6"/><circle cx="598.4" cy="509.6" r="3.6" fill="#f2f6f6"/><circle cx="765.6" cy="475.0" r="3.0" fill="#f2f6f6"/><circle cx="861.2" cy="398.3" r="3.6" fill="#f2f6f6"/><circle cx="944.8" cy="399.6" r="4.2" fill="#f2f6f6"/><circle cx="1174.9" cy="588.2" r="4.2" fill="#f2f6f6"/><g transform="translate(592.5 335.5) rotate(-7.05)" fill="none" stroke="#3c80d0" stroke-width="1.4">
<rect x="-592.3" y="-333.3" width="1184.6" height="666.6"/><rect x="-606.8" y="-347.8" width="29.0" height="29.0"/><rect x="-14.5" y="-347.8" width="29.0" height="29.0"/><rect x="577.8" y="-347.8" width="29.0" height="29.0"/><rect x="-606.8" y="-14.5" width="29.0" height="29.0"/><rect x="577.8" y="-14.5" width="29.0" height="29.0"/><rect x="-606.8" y="318.8" width="29.0" height="29.0"/><rect x="-14.5" y="318.8" width="29.0" height="29.0"/><rect x="577.8" y="318.8" width="29.0" height="29.0"/>
<circle cx="0" cy="0" r="24"/><path d="M-36 0 H36 M0 -36 V36"/></g></svg></div>
<svg style="left:1350px;top:938px" width="320" height="56" viewBox="0 0 320 56">
<defs><linearGradient id="gtr" x1="0" y1="0" x2="0" y2="1"><stop offset="0" stop-color="#dcddd8"/><stop offset="0.5" stop-color="#cdcec9"/><stop offset="1" stop-color="#b2b3ae"/></linearGradient>
<linearGradient id="gpl" x1="0" y1="0" x2="1" y2="1"><stop offset="0" stop-color="#d3e765"/><stop offset="0.6" stop-color="#b3d240"/><stop offset="1" stop-color="#93b726"/></linearGradient></defs>
<g fill="url(#gtr)" stroke="#a3a49f" stroke-width="0.7">
<rect x="9.6" y="15" width="8" height="25.2"/><path d="M35 15 V40.2 L18.5 27.6 Z"/><path d="M52 15 V40.2 L35 27.6 Z"/>
<path d="M97 15 V40.2 L76.8 27.6 Z"/><path d="M114.8 15 V40.2 L97 27.6 Z"/>
<path d="M203 15 V40.2 L221.5 27.6 Z"/><path d="M221.5 15 V40.2 L242 27.6 Z"/>
<path d="M265 15 V40.2 L283 27.6 Z"/><path d="M283 15 V40.2 L301 27.6 Z"/><rect x="300.5" y="15" width="8" height="25.2"/>
</g>
<path d="M140 7 L180 27.3 L140 47.6 Z" fill="url(#gpl)" stroke="#6f9a17" stroke-width="1.4" stroke-linejoin="round"/>
</svg>
<svg style="left:2040px;top:943.5px" width="47" height="38" viewBox="0 0 49 39">
<rect x="1.2" y="6" width="46" height="31" rx="5" fill="none" stroke="#797979" stroke-width="2.7"/>
<rect x="8" y="1" width="6" height="5" fill="#797979"/>
<circle cx="25" cy="21.5" r="10.5" fill="none" stroke="#797979" stroke-width="2.7"/>
<circle cx="25" cy="21.5" r="5.5" fill="#797979"/><circle cx="26.5" cy="19.5" r="2.2" fill="#353535"/>
<circle cx="40.5" cy="11.5" r="1.3" fill="#797979"/></svg>
<div class="b" style="left:1338.5px;top:1026.0px;width:3.0px;height:3.0px;background:#6a6a6a;"></div>
<div class="b" style="left:1338.5px;top:1559.0px;width:3.0px;height:3.0px;background:#6a6a6a;"></div>
<div class="b" style="left:1344.5px;top:1026.0px;width:3.0px;height:3.0px;background:#6a6a6a;"></div>
<div class="b" style="left:1344.5px;top:1559.0px;width:3.0px;height:3.0px;background:#6a6a6a;"></div>
<div class="b" style="left:1350.5px;top:1026.0px;width:3.0px;height:3.0px;background:#6a6a6a;"></div>
<div class="b" style="left:1350.5px;top:1559.0px;width:3.0px;height:3.0px;background:#6a6a6a;"></div>
<div class="b" style="left:1356.5px;top:1026.0px;width:3.0px;height:3.0px;background:#6a6a6a;"></div>
<div class="b" style="left:1356.5px;top:1559.0px;width:3.0px;height:3.0px;background:#6a6a6a;"></div>
<div class="b" style="left:1362.5px;top:1026.0px;width:3.0px;height:3.0px;background:#6a6a6a;"></div>
<div class="b" style="left:1362.5px;top:1559.0px;width:3.0px;height:3.0px;background:#6a6a6a;"></div>
<div class="b" style="left:1368.5px;top:1026.0px;width:3.0px;height:3.0px;background:#6a6a6a;"></div>
<div class="b" style="left:1368.5px;top:1559.0px;width:3.0px;height:3.0px;background:#6a6a6a;"></div>
<span class="t " style="left:591.4px;top:1039.8px;font-size:26.5px;line-height:26.5px;color:#fff;letter-spacing:0.95px;">Timeline</span>
<svg style="left:2094px;top:1040.5px" width="21" height="21" viewBox="0 0 21 21">
<rect x="0.7" y="0.7" width="19.6" height="19.6" rx="3" fill="none" stroke="#6d6d6d" stroke-width="1.4" stroke-dasharray="3.2 1.2"/>
<rect x="7.5" y="4" width="9" height="8" fill="none" stroke="#6d6d6d" stroke-width="1.4"/>
<rect x="4.5" y="8" width="9" height="8" fill="#353535" stroke="#6d6d6d" stroke-width="1.4"/></svg>
<svg style="left:619px;top:1103px" width="42" height="42" viewBox="0 0 42 42">
<ellipse cx="21" cy="39" rx="17" ry="2.5" fill="#2a2a2a" opacity="0.6"/>
<path d="M14.5 1 h12 v13 h13 v12 h-13 v13 h-12 v-13 h-13 v-12 h13 z" fill="url(#ggreen)" stroke="#7da61d" stroke-width="1" stroke-linejoin="round"/></svg>
<div class="b" style="left:678.0px;top:1103.0px;width:1.0px;height:40.0px;background:#2a2a2a;"></div>
<div class="b" style="left:679.0px;top:1103.0px;width:1.0px;height:40.0px;background:#404040;"></div>
<div class="b" style="left:688.0px;top:1096.0px;width:59.0px;height:57.0px;background:linear-gradient(#3a3a3a,#3e3e3e);border:1px solid #262626;border-radius:5px;box-shadow:0 1px 0 #454545;"></div>
<svg style="left:696px;top:1106px" width="43" height="36" viewBox="0 0 43 36">
<defs><linearGradient id="gmag" x1="0" y1="0" x2="0" y2="1"><stop offset="0" stop-color="#f2454a"/><stop offset="1" stop-color="#d9151f"/></linearGradient></defs>
<path d="M1 1 H24 C35 1 42 8 42 17.5 C42 27 35 34 24 34 H1 V24 H23 C28 24 31 21 31 17.5 C31 14 28 11 23 11 H1 Z" fill="url(#gmag)" stroke="#b4101a" stroke-width="1"/>
<rect x="3" y="3" width="7" height="6" fill="#dedede"/><rect x="3" y="26" width="7" height="6" fill="#dedede"/></svg>
<svg style="left:762px;top:1099px" width="38" height="49" viewBox="0 0 38 49">
<path d="M2 1 C1 10 6 18 17 27 L20 23 C14 15 8 8 2 1 Z" fill="#e6e6e0" stroke="#bcbcb4" stroke-width="0.8"/>
<path d="M36 1 C37 10 32 18 21 27 L18 23 C24 15 30 8 36 1 Z" fill="#e6e6e0" stroke="#bcbcb4" stroke-width="0.8"/>
<path d="M19 25 L12 33 M19 25 L26 33" stroke="#d8404a" stroke-width="3" fill="none"/>
<ellipse cx="8.5" cy="39" rx="5" ry="7.5" transform="rotate(25 8.5 39)" fill="none" stroke="#d8404a" stroke-width="3"/>
<ellipse cx="29.5" cy="39" rx="5" ry="7.5" transform="rotate(-25 29.5 39)" fill="none" stroke="#d8404a" stroke-width="3"/></svg>
<div class="b" style="left:819.5px;top:1103.0px;width:1.0px;height:40.0px;background:#2a2a2a;"></div>
<div class="b" style="left:820.5px;top:1103.0px;width:1.0px;height:40.0px;background:#404040;"></div>
<div class="b" style="left:1100.0px;top:1094.0px;width:994.0px;height:60.5px;background:#191919;"></div>
<svg style="left:1195px;top:1094px" width="75" height="61" viewBox="0 0 75 61">
<rect x="18.5" y="0" width="37.5" height="61" rx="9" fill="#2b4a6a"/>
<ellipse cx="19" cy="30.5" rx="11.6" ry="15.5" fill="#4a8bcb" opacity="0.92"/>
<ellipse cx="55" cy="30.5" rx="11.6" ry="15.5" fill="#4a8bcb" opacity="0.92"/>
<rect x="23.5" y="0.8" width="29" height="12" fill="none" stroke="#c7324b" stroke-width="1.6"/>
<path d="M35.3 0 V61" stroke="#c7324b" stroke-width="1.4"/></svg>
<div class="b" style="left:601.5px;top:1174.0px;width:1500.0px;height:364.0px;background:#191919;"></div>
<span class="t " style="left:633.4px;top:1205.2px;font-size:32.5px;line-height:32.5px;color:#9b9b9b;letter-spacing:0.28px;">00:00:39,30</span>
<span class="t " style="left:1139.9px;top:1178.0px;font-size:21px;line-height:21px;color:#cacaca;letter-spacing:0.36px;">00:00:38</span>
<span class="t " style="left:1366.9px;top:1178.0px;font-size:21px;line-height:21px;color:#cacaca;letter-spacing:0.34px;">00:00:40</span>
<span class="t " style="left:1593.9px;top:1178.0px;font-size:21px;line-height:21px;color:#cacaca;letter-spacing:0.38px;">00:00:42</span>
<span class="t " style="left:1820.9px;top:1178.0px;font-size:21px;line-height:21px;color:#cacaca;letter-spacing:0.31px;">00:00:44</span>
<span class="t " style="left:2047.9px;top:1178.0px;font-size:21px;line-height:21px;color:#cacaca;letter-spacing:0.36px;">00:00:46</span>
<div class="b" style="left:1182.1px;top:1206.0px;width:2.0px;height:37.5px;background:#cfcfcf;"></div>
<div class="b" style="left:1295.7px;top:1216.5px;width:2.0px;height:27.0px;background:#cfcfcf;"></div>
<div class="b" style="left:1522.9px;top:1216.5px;width:2.0px;height:27.0px;background:#cfcfcf;"></div>
<div class="b" style="left:1636.5px;top:1206.0px;width:2.0px;height:37.5px;background:#cfcfcf;"></div>
<div class="b" style="left:1750.1px;top:1216.5px;width:2.0px;height:27.0px;background:#cfcfcf;"></div>
<div class="b" style="left:1863.7px;top:1206.0px;width:2.0px;height:37.5px;background:#cfcfcf;"></div>
<div class="b" style="left:1977.3px;top:1216.5px;width:2.0px;height:27.0px;background:#cfcfcf;"></div>
<div class="b" style="left:2090.9px;top:1206.0px;width:2.0px;height:37.5px;background:#cfcfcf;"></div>
<div class="b" style="left:1010.0px;top:1256.8px;width:1080.0px;height:124.4px;background:linear-gradient(#000 0%,#0a0a0a 20%,#2f2f2f 100%);border-top:2px solid #3f8aa8;border-bottom:2px solid #3f8aa8;"></div>
<div class="b" style="left:1010.0px;top:1396.0px;width:1080.0px;height:124.0px;background:linear-gradient(#030303 0%,#0a0a0a 20%,#2e2e2e 100%);border-top:2px solid #3f8aa8;border-bottom:2px solid #3f8aa8;"></div>
<div class="b" style="left:610.5px;top:1257.0px;width:420.0px;height:125.0px;background:#000;border:2px solid #3f8aa8;border-right:none;border-radius:13px 0 0 0;overflow:hidden;"><div class="b" style="left:0;top:0;width:420px;height:46px;background:linear-gradient(180deg,rgba(255,255,255,0.21),rgba(255,255,255,0.03) 80%,rgba(255,255,255,0));"></div></div>
<svg style="left:620px;top:1267px" width="24" height="23"><path d="M0.5 0 L7 0 L12 11 L17 0 L23.5 0 L13.5 22 L10.5 22 Z" fill="#454545"/></svg>
<span class="t " style="left:659.5px;top:1267.3px;font-size:22.5px;line-height:22.5px;color:#f0f0f0;letter-spacing:0.63px;text-shadow:0 0 6px #000;">Track 5</span>
<div class="b" style="left:1412.0px;top:1251.0px;width:410.0px;height:6.0px;background:#46a0c2;"></div>
<div class="b" style="left:1000.0px;top:1257.0px;width:990.2px;height:124.5px;background:linear-gradient(#909191 0%,#6c6d6d 24%,#525354 36%,#404244 65%,#303335 100%);border-top:2.4px solid #ee1420;border-bottom:2.4px solid #ee1420;border-radius:0 13px 13px 0;box-shadow:4px 2px 9px rgba(0,0,0,0.75);"></div>
<span class="t " style="left:1094.6px;top:1267.8px;font-size:22.5px;line-height:22.5px;color:#fafafa;font-weight:bold;text-shadow:1px 1px 2px #333;">Snow%04d.png</span>
<svg style="left:1380px;top:1196px" width="52" height="66" viewBox="0 0 52 66">
<defs><linearGradient id="gph" x1="0" y1="0" x2="0" y2="1"><stop offset="0" stop-color="#0a3f9a"/><stop offset="0.45" stop-color="#0c5a9a"/><stop offset="1" stop-color="#1e8a94"/></linearGradient>
<linearGradient id="gphs" x1="0" y1="0" x2="0" y2="1"><stop offset="0" stop-color="#9fb6cf"/><stop offset="0.25" stop-color="#27466b"/><stop offset="1" stop-color="#07243f"/></linearGradient></defs>
<path d="M25.5 2 C39 2 49 10 47 21 C46 27 35 40 25.5 50 C16 40 5 27 4 21 C2 10 12 2 25.5 2 Z" fill="url(#gph)" stroke="url(#gphs)" stroke-width="3.5"/>
<path d="M17 49 C20 45 31 45 34 49 L25.5 62 Z" fill="#d40a22"/>
</svg>
<div class="b" style="left:1404.3px;top:1256.0px;width:2.2px;height:269.5px;background:#f0142a;"></div>
<svg style="left:1393px;top:1370px" width="20" height="20"><circle cx="10" cy="10" r="8.7" fill="#d6d6d6" opacity="0.95"/></svg>
<div class="b" style="left:2090.0px;top:1257.5px;width:11.5px;height:268.5px;background:linear-gradient(90deg,#2f7893,#1f5468 45%,#245d74);border-radius:6px;"></div>
<div class="b" style="left:2090.0px;top:1257.5px;width:11.5px;height:101.0px;background:linear-gradient(90deg,#4f9fc0,#3c87a8);border-radius:6px;"></div>
<div class="b" style="left:1000.0px;top:1526.0px;width:1090.0px;height:12.0px;background:linear-gradient(#2d7690,#22586c 40%,#245c72);border-radius:0 6px 6px 0;"></div>
<svg style="left:2096.5px;top:1588.5px" width="22" height="22"><rect x="17.1" y="0.0" width="3.3" height="3.3" fill="#707070"/><rect x="11.4" y="5.7" width="3.3" height="3.3" fill="#707070"/><rect x="17.1" y="5.7" width="3.3" height="3.3" fill="#707070"/><rect x="5.7" y="11.4" width="3.3" height="3.3" fill="#707070"/><rect x="11.4" y="11.4" width="3.3" height="3.3" fill="#707070"/><rect x="17.1" y="11.4" width="3.3" height="3.3" fill="#707070"/><rect x="0.0" y="17.1" width="3.3" height="3.3" fill="#707070"/><rect x="5.7" y="17.1" width="3.3" height="3.3" fill="#707070"/><rect x="11.4" y="17.1" width="3.3" height="3.3" fill="#707070"/><rect x="17.1" y="17.1" width="3.3" height="3.3" fill="#707070"/></svg>
<div class="b" style="left:2090.0px;top:1526.0px;width:12.0px;height:12.5px;background:#353535;"></div>
<div class="b" style="left:2101.5px;top:1170.0px;width:17.5px;height:95.0px;background:#353535;"></div>
<div class="b" style="left:490.5px;top:1357.5px;width:345.0px;height:246.0px;background:#1b1b1b;box-shadow:0 0 0 1px #202020;"></div>
<div class="b" style="left:490.5px;top:1357.5px;width:345.0px;height:48.5px;background:#2969ae;border:2px solid #4791e2;"></div>
<span class="t " style="left:544.1px;top:1370.7px;font-size:26.5px;line-height:26.5px;color:#06101f;letter-spacing:0.44px;">Bezier</span>
<svg style="left:813px;top:1375px" width="8" height="14"><path d="M0 0 L7.5 7 L0 14 Z" fill="#0c1a2e"/></svg>
<span class="t " style="left:544.1px;top:1419.1px;font-size:26.5px;line-height:26.5px;color:#fff;letter-spacing:0.33px;">Linear</span>
<span class="t " style="left:545.0px;top:1467.5px;font-size:26.5px;line-height:26.5px;color:#fff;letter-spacing:0.53px;">Constant</span>
<div class="b" style="left:498.5px;top:1503.5px;width:330.0px;height:1.0px;background:#262626;"></div>
<span class="t " style="left:543.9px;top:1519.4px;font-size:26.5px;line-height:26.5px;color:#fff;letter-spacing:0.66px;">Insert Keyframe</span>
<span class="t " style="left:544.1px;top:1568.4px;font-size:26.5px;line-height:26.5px;color:#fff;letter-spacing:0.29px;">Remove Keyframe</span>
<div class="b" style="left:830.6px;top:723.0px;width:356.0px;height:1355.0px;background:#1b1b1b;"></div>
<div class="b" style="left:830.6px;top:2078.0px;width:356.0px;height:3.0px;background:#000;"></div>
<span class="t " style="left:884.1px;top:735.5px;font-size:26.5px;line-height:26.5px;color:#fff;letter-spacing:0.41px;">Ease (Default)</span>
<span class="t " style="left:884.1px;top:783.8px;font-size:26.5px;line-height:26.5px;color:#fff;letter-spacing:-0.46px;">Ease In</span>
<span class="t " style="left:884.1px;top:832.2px;font-size:26.5px;line-height:26.5px;color:#fff;letter-spacing:0.07px;">Ease Out</span>
<span class="t " style="left:884.1px;top:880.6px;font-size:26.5px;line-height:26.5px;color:#fff;letter-spacing:0.36px;">Ease In/Out</span>
<span class="t " style="left:884.1px;top:928.9px;font-size:26.5px;line-height:26.5px;color:#fff;letter-spacing:-0.24px;">Ease In (Quad)</span>
<span class="t " style="left:884.1px;top:977.3px;font-size:26.5px;line-height:26.5px;color:#fff;letter-spacing:-0.39px;">Ease In (Cubic)</span>
<span class="t " style="left:884.1px;top:1025.7px;font-size:26.5px;line-height:26.5px;color:#fff;letter-spacing:0.07px;">Ease In (Quart)</span>
<span class="t " style="left:884.1px;top:1074.1px;font-size:26.5px;line-height:26.5px;color:#fff;letter-spacing:0.14px;">Ease In (Quint)</span>
<span class="t " style="left:884.1px;top:1122.4px;font-size:26.5px;line-height:26.5px;color:#fff;letter-spacing:-0.45px;">Ease In (Sine)</span>
<span class="t " style="left:884.1px;top:1170.8px;font-size:26.5px;line-height:26.5px;color:#fff;letter-spacing:-0.28px;">Ease In (Expo)</span>
<span class="t " style="left:884.1px;top:1219.2px;font-size:26.5px;line-height:26.5px;color:#fff;letter-spacing:-0.40px;">Ease In (Circ)</span>
<span class="t " style="left:884.1px;top:1267.5px;font-size:26.5px;line-height:26.5px;color:#fff;letter-spacing:-0.37px;">Ease In (Back)</span>
<span class="t " style="left:884.1px;top:1315.9px;font-size:26.5px;line-height:26.5px;color:#fff;letter-spacing:0.09px;">Ease Out (Quad)</span>
<span class="t " style="left:884.1px;top:1364.3px;font-size:26.5px;line-height:26.5px;color:#fff;letter-spacing:-0.07px;">Ease Out (Cubic)</span>
<span class="t " style="left:884.1px;top:1412.6px;font-size:26.5px;line-height:26.5px;color:#fff;letter-spacing:0.36px;">Ease Out (Quart)</span>
<span class="t " style="left:884.1px;top:1461.0px;font-size:26.5px;line-height:26.5px;color:#fff;letter-spacing:0.42px;">Ease Out (Quint)</span>
<span class="t " style="left:884.1px;top:1509.4px;font-size:26.5px;line-height:26.5px;color:#fff;letter-spacing:-0.10px;">Ease Out (Sine)</span>
<span class="t " style="left:884.1px;top:1557.8px;font-size:26.5px;line-height:26.5px;color:#fff;letter-spacing:0.05px;">Ease Out (Expo)</span>
<div class="b" style="left:830.6px;top:1594.1px;width:356.0px;height:48.4px;background:#2969ae;border:2px solid #4791e2;"></div>
<span class="t " style="left:884.1px;top:1606.1px;font-size:26.5px;line-height:26.5px;color:#06101f;letter-spacing:-0.05px;">Ease Out (Circ)</span>
<span class="t " style="left:884.1px;top:1654.5px;font-size:26.5px;line-height:26.5px;color:#fff;letter-spacing:-0.03px;">Ease Out (Back)</span>
<span class="t " style="left:884.1px;top:1702.9px;font-size:26.5px;line-height:26.5px;color:#fff;letter-spacing:0.26px;">Ease In/Out (Quad)</span>
<span class="t " style="left:884.1px;top:1751.2px;font-size:26.5px;line-height:26.5px;color:#fff;letter-spacing:0.11px;">Ease In/Out (Cubic)</span>
<span class="t " style="left:884.1px;top:1799.6px;font-size:26.5px;line-height:26.5px;color:#fff;letter-spacing:0.47px;">Ease In/Out (Quart)</span>
<span class="t " style="left:884.1px;top:1848.0px;font-size:26.5px;line-height:26.5px;color:#fff;letter-spacing:0.52px;">Ease In/Out (Quint)</span>
<span class="t " style="left:884.1px;top:1896.3px;font-size:26.5px;line-height:26.5px;color:#fff;letter-spacing:0.10px;">Ease In/Out (Sine)</span>
<span class="t " style="left:884.1px;top:1944.7px;font-size:26.5px;line-height:26.5px;color:#fff;letter-spacing:0.22px;">Ease In/Out (Expo)</span>
<span class="t " style="left:884.1px;top:1993.1px;font-size:26.5px;line-height:26.5px;color:#fff;letter-spacing:0.13px;">Ease In/Out (Circ)</span>
<span class="t " style="left:884.1px;top:2041.5px;font-size:26.5px;line-height:26.5px;color:#fff;letter-spacing:0.16px;">Ease In/Out (Back)</span>
<svg style="left:1140px;top:1617px" width="30" height="44" viewBox="0 0 30 44">
<path d="M2.7 2.7 L2.7 38.6 L9.8 31.5 L13 37.5 Q14.8 40.3 17.3 39 Q19.3 37.8 18.3 35.5 L15.2 28.8 L25.6 26.2 Z" fill="#2b2b2b" stroke="#f6f6f6" stroke-width="2.2" stroke-linejoin="round"/></svg>
</body></html>
